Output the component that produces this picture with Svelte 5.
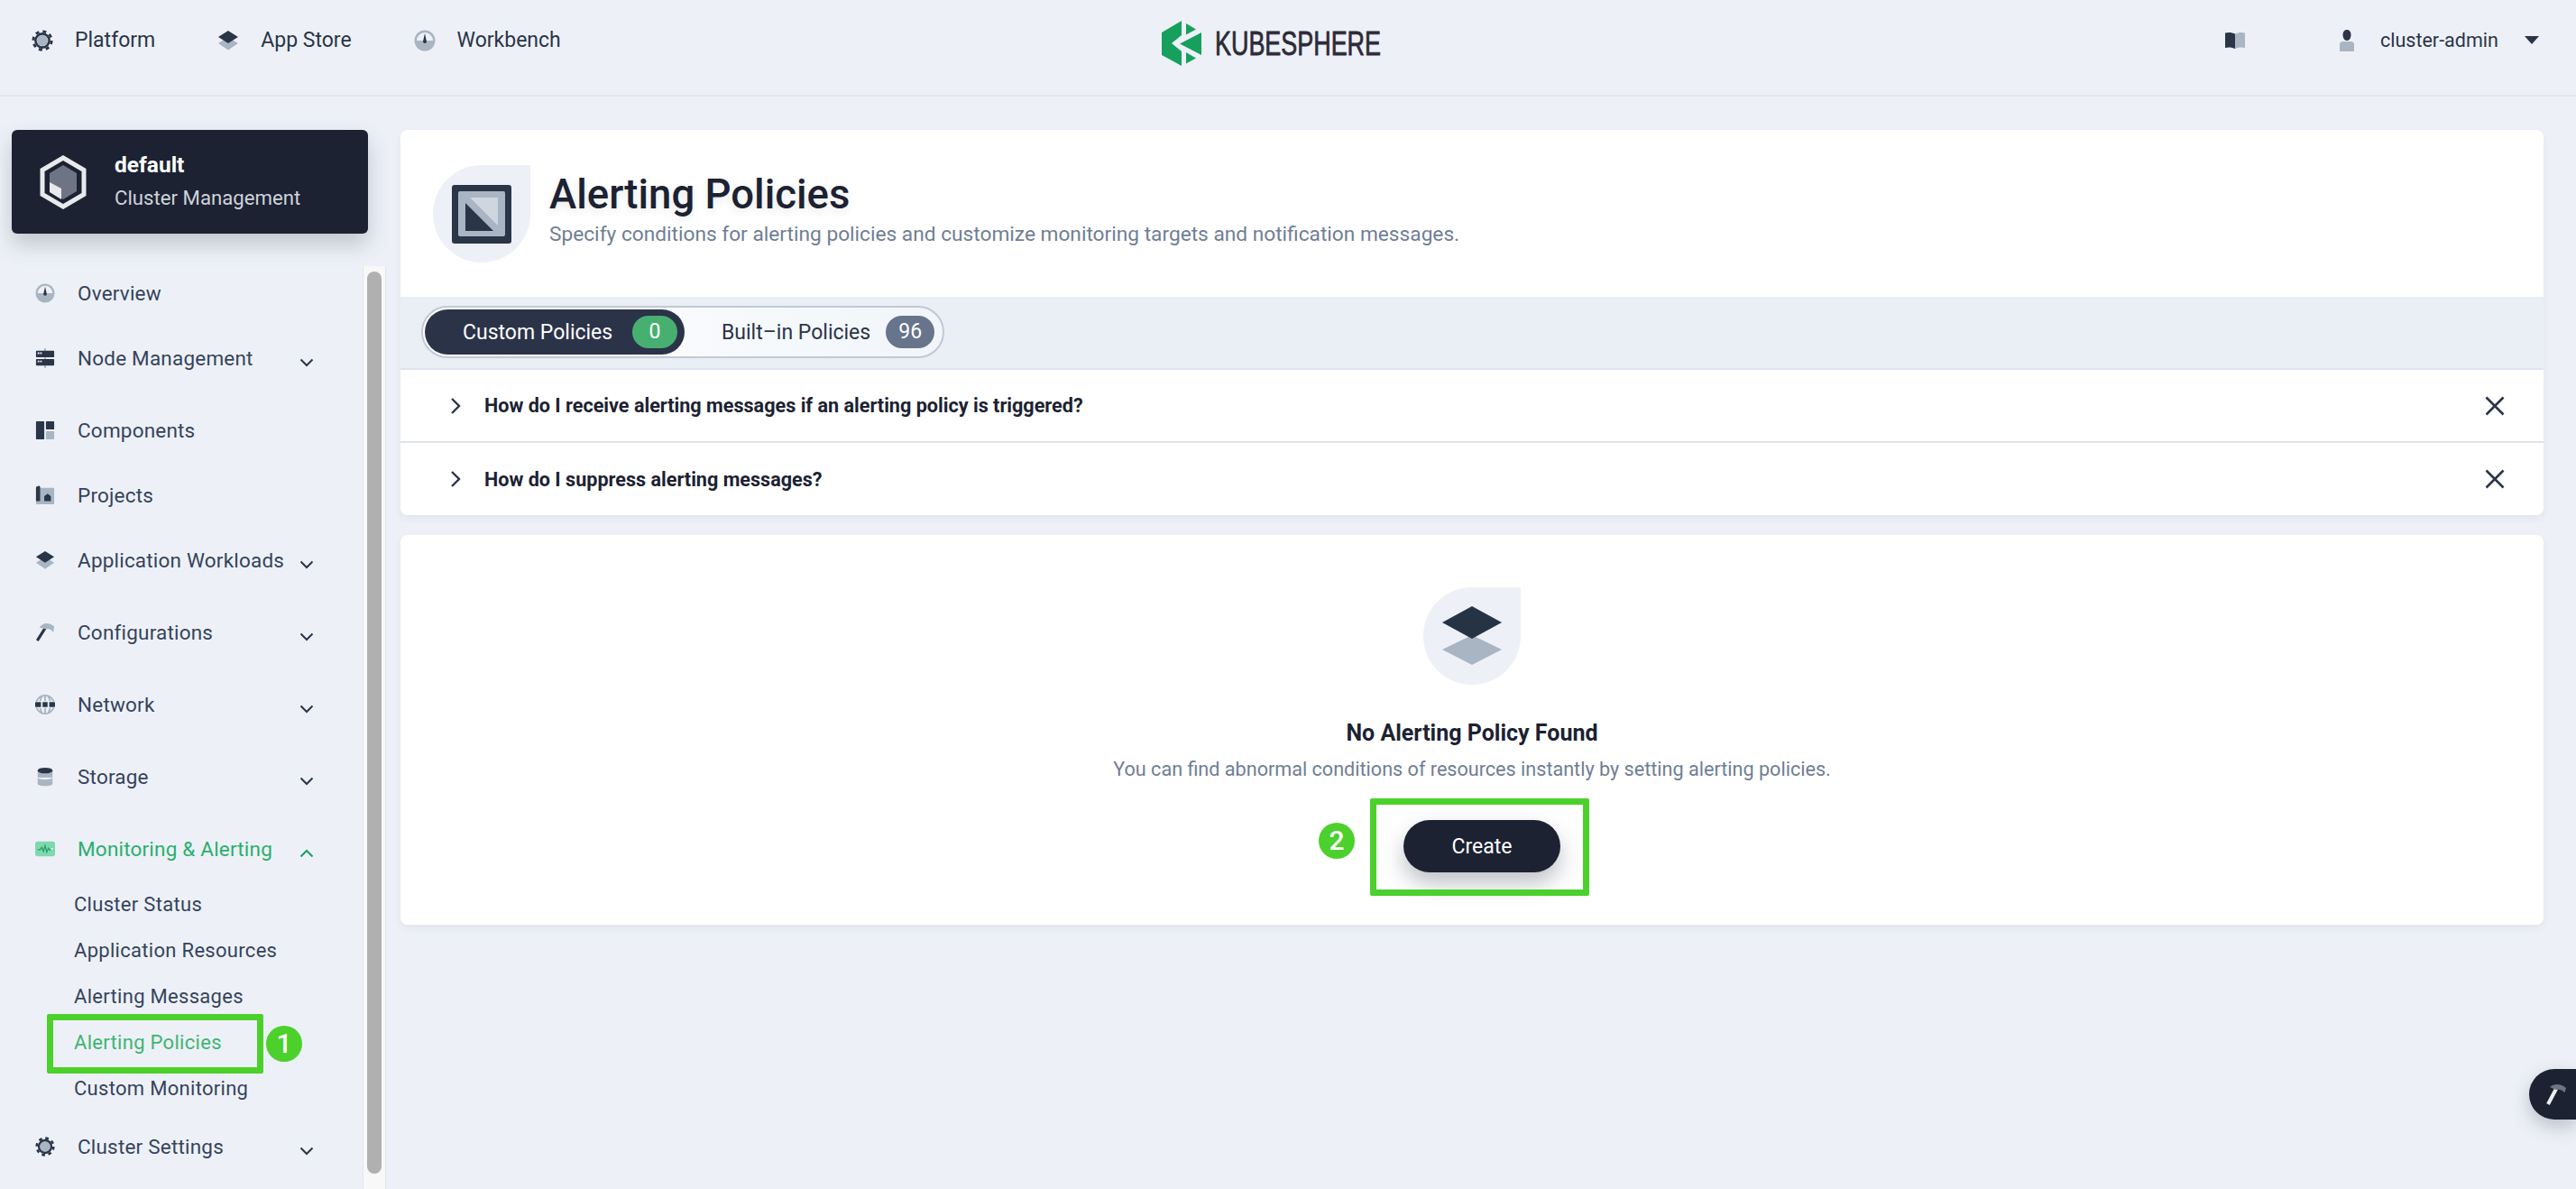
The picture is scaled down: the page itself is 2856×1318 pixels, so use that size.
<script>
	const menu = [
		{ icon: 'gauge', label: 'Overview' },
		{ icon: 'nodes', label: 'Node Management', more: true },
		{ icon: 'components', label: 'Components' },
		{ icon: 'projects', label: 'Projects' },
		{ icon: 'layers', label: 'Application Workloads', more: true },
		{ icon: 'hammer', label: 'Configurations', more: true },
		{ icon: 'network', label: 'Network', more: true },
		{ icon: 'storage', label: 'Storage', more: true },
		{
			icon: 'pulse',
			label: 'Monitoring & Alerting',
			open: true,
			children: ['Cluster Status', 'Application Resources', 'Alerting Messages', 'Alerting Policies', 'Custom Monitoring']
		},
		{ icon: 'gear', label: 'Cluster Settings', more: true }
	];
	const tips = [
		'How do I receive alerting messages if an alerting policy is triggered?',
		'How do I suppress alerting messages?'
	];
</script>

{#snippet icon(name)}
	<svg class="icon" viewBox="0 0 24 24" aria-hidden="true">
		{#if name === 'gear'}
			<circle cx="12" cy="12" r="6" fill="#a9b5c2" />
			<circle cx="12" cy="12" r="7.6" fill="none" stroke="#2a3548" stroke-width="2.6" />
			<circle cx="12" cy="12" r="10.2" fill="none" stroke="#2a3548" stroke-width="2.8" stroke-dasharray="4 4.01" />
		{:else if name === 'gauge'}
			<circle cx="12" cy="12" r="11.5" fill="#a9b5c2" />
			<path d="M3 12a9 9 0 0 1 18 0z" fill="#edf1f7" />
			<path d="M12 4l1.9 8.5a2 2 0 1 1-3.8 0z" fill="#2a3548" />
		{:else if name === 'layers'}
			<path d="M12 8l11 7-11 7.5L1 15z" fill="#a9b5c2" />
			<path d="M12 1l11 7-11 7L1 8z" fill="#2a3548" />
		{:else if name === 'nodes'}
			<rect x="11" y="0" width="2" height="24" fill="#a9b5c2" />
			<rect x="1" y="3" width="22" height="8" rx="1" fill="#2a3548" />
			<rect x="1" y="13" width="22" height="8" rx="1" fill="#2a3548" />
			<path d="M3 5h2v2H3zM6 5h2v2H6zM3 15h2v2H3zM6 15h2v2H6z" fill="#edf1f7" />
		{:else if name === 'components'}
			<rect x="1" y="1" width="10" height="22" rx="1" fill="#2a3548" />
			<rect x="13" y="1" width="10" height="10" rx="1" fill="#2a3548" />
			<rect x="13" y="13" width="10" height="10" rx="1" fill="#a9b5c2" />
		{:else if name === 'projects'}
			<rect x="1" y="3" width="22" height="20" rx="1" fill="#a9b5c2" />
			<path d="M3 1a2 2 0 0 1 3 1v17H1V3a2 2 0 0 1 2-2z" fill="#2a3548" />
			<path d="M11 13l4-3 4 3v6h-8z" fill="#2a3548" />
		{:else if name === 'hammer'}
			<path d="M2.500 22L12 7" stroke="#2a3548" stroke-width="3.4" fill="none" />
			<path d="M5 6c4-6 12-7 18-1l-1 7c-3-4-6-5-10-4z" fill="#a9b5c2" />
		{:else if name === 'network'}
			<circle cx="12" cy="12" r="11" fill="none" stroke="#a9b5c2" stroke-width="2" />
			<path d="M12 1v22M8 2c-3 6-3 14 0 20M16 2c3 6 3 14 0 20" fill="none" stroke="#a9b5c2" stroke-width="2" />
			<rect x="1" y="8" width="22" height="8" rx="3" fill="#edf1f7" />
			<path d="M2 9h5v6H2a3 3 0 0 1 0-6zM9 9h6v6H9zM17 9h5a3 3 0 0 1 0 6h-5z" fill="#2a3548" />
		{:else if name === 'storage'}
			<path d="M3 5h18v8H3z" fill="#a9b5c2" />
			<path d="M3 14c4 2 14 2 18 0v7c-2 3-16 3-18 0z" fill="#a9b5c2" />
			<ellipse cx="12" cy="4.500" rx="9" ry="3.500" fill="#2a3548" />
		{:else if name === 'pulse'}
			<rect x="0" y="3" width="24" height="18" rx="3" fill="#7fd8ae" />
			<path d="M3 13h3l2-3 2 5 2-7 2 8 2-5 1 2h2" fill="none" stroke="#1f9d62" stroke-width="1.3" />
			<circle cx="20.500" cy="12" r="1" fill="#fff" />
		{:else if name === 'book'}
			<path d="M1 3.500c4-1 8-.5 11 1V21c-3-1.500-7-2-11-1z" fill="#2a3548" />
			<path d="M23 3.500c-4-1-8-.5-11 1V21c3-1.500 7-2 11-1z" fill="#a9b5c2" />
		{:else if name === 'user'}
			<path d="M4 16c0-2 2-3 4-3h8c2 0 4 1 4 3v8H4z" fill="#a9b5c2" />
			<path d="M12 0c3 0 4.500 2.500 4.500 5.500S15 12 12 12s-4.500-3.500-4.500-6.500S9 0 12 0z" fill="#2a3548" />
		{/if}
	</svg>
{/snippet}

{#snippet chevron(up)}
	<svg class="chev" class:up viewBox="0 0 16 10" aria-hidden="true">
		<path d="M1.500 1.500L8 8l6.500-6.500" fill="none" stroke="currentColor" stroke-width="2" />
	</svg>
{/snippet}

<div class="app">
	<header class="topbar">
		<nav class="topnav">
			<a class="top-link" href="#platform">{@render icon('gear')}Platform</a>
			<a class="top-link" href="#store">{@render icon('layers')}App Store</a>
			<a class="top-link" href="#workbench">{@render icon('gauge')}Workbench</a>
		</nav>
		<div class="logo">
			<svg class="logo-mark" viewBox="0 0 44 50" aria-hidden="true">
				<path d="M22 0L0 13v25l22 12V34l-11-9 11-9z" fill="#17a05d" />
				<path d="M44 13L20 25.500 44 38z" fill="#17a05d" />
				<path d="M27 3l11 6.500-11 6zM27 35l11 6.500-11 6z" fill="#17a05d" />
			</svg>
			<svg class="logo-word" viewBox="0 0 184 30">
				<text x="0" y="28" textLength="184" lengthAdjust="spacingAndGlyphs">KUBESPHERE</text>
			</svg>
		</div>
		<div class="top-right">
			{@render icon('book')}
			<span class="user">{@render icon('user')}</span>
			<span class="user-name">cluster-admin</span>
			<span class="caret"></span>
		</div>
	</header>

	<div class="body">
		<aside class="sidebar">
			<div class="cluster">
				<svg class="cluster-icon" viewBox="0 0 54 60" aria-hidden="true">
					<path d="M27 3l23 13.500v27L27 57 4 43.500v-27z" fill="none" stroke="#e8e9ec" stroke-width="5" />
					<path d="M27 11l15 9v20l-15 9-15-9V20z" fill="#6d7584" />
					<path d="M12 30l13 7v12l-13-8z" fill="#e8e9ec" />
				</svg>
				<div class="cluster-text">
					<div class="cluster-name">default</div>
					<div class="cluster-sub">Cluster Management</div>
				</div>
			</div>

			<div class="nav-wrap">
				<ul class="menu">
					{#each menu as item}
						<li class="entry" class:group={item.more}>
							<div class="entry-row" class:active={item.open}>
								{@render icon(item.icon)}
								<span class="entry-label">{item.label}</span>
								{#if item.more}
									{@render chevron(false)}
								{:else if item.open}
									{@render chevron(true)}
								{/if}
							</div>
							{#if item.children}
								<ul class="submenu">
									{#each item.children as child}
										<li class="sub-item" class:current={child === 'Alerting Policies'}>
											{child}
											{#if child === 'Alerting Policies'}
												<span class="mark mark-menu"></span>
												<span class="step step-menu">1</span>
											{/if}
										</li>
									{/each}
								</ul>
							{/if}
						</li>
					{/each}
				</ul>
				<div class="scrollbar"><div class="thumb"></div></div>
			</div>
		</aside>

		<main class="content">
			<section class="card">
				<div class="page-head">
					<div class="drop">
						<svg class="policy-icon" viewBox="0 0 66 65" aria-hidden="true">
							<rect width="66" height="65" rx="3" fill="#2a3548" />
							<rect x="7" y="7" width="52" height="50" rx="2" fill="#a9b5c2" />
							<path d="M20 14h31v31z" fill="#cfd6df" />
							<path d="M15 20l31 31H15z" fill="#2a3548" />
						</svg>
					</div>
					<div class="head-text">
						<h1>Alerting Policies</h1>
						<p>Specify conditions for alerting policies and customize monitoring targets and notification messages.</p>
					</div>
				</div>
				<div class="tab-band">
					<div class="tabs">
						<div class="tab on">Custom Policies <span class="count green">0</span></div>
						<div class="tab">Built–in Policies <span class="count grey">96</span></div>
					</div>
				</div>
				{#each tips as tip}
					<div class="tip">
						<svg class="tip-arrow" viewBox="0 0 12 20" aria-hidden="true">
							<path d="M2 2l8 8-8 8" fill="none" stroke="#2a3548" stroke-width="2.400" />
						</svg>
						<span class="tip-text">{tip}</span>
						<svg class="tip-close" viewBox="0 0 22 22" aria-hidden="true">
							<path d="M1.500 1.500l19 19M20.500 1.500l-19 19" fill="none" stroke="#2a3548" stroke-width="2.600" />
						</svg>
					</div>
				{/each}
			</section>

			<section class="card empty">
				<div class="drop">
					<svg class="empty-icon" viewBox="0 0 66 66" aria-hidden="true">
						<path d="M33 32l33 16-33 17L0 48z" fill="#a9b5c2" />
						<path d="M33 0l33 18-33 18L0 18z" fill="#263345" />
					</svg>
				</div>
				<h2>No Alerting Policy Found</h2>
				<p>You can find abnormal conditions of resources instantly by setting alerting policies.</p>
				<div class="create-wrap">
					<button class="create">Create</button>
					<span class="mark mark-create"></span>
					<span class="step step-create">2</span>
				</div>
			</section>
		</main>
	</div>

	<div class="tool-btn">
		<svg viewBox="0 0 24 24" aria-hidden="true">
			<path d="M3 23L12 6" stroke="#eceef1" stroke-width="4" fill="none" />
			<path d="M5 4c5-4 12-4 18 1l-1.500 5c-3-3-6-4-10-3z" fill="#6d7584" />
		</svg>
	</div>
</div>

<style>
	:global(body) {
		margin: 0;
		background: #edf1f7;
	}

	.app {
		position: relative;
		height: 1318px;
		overflow: hidden;
		background: #edf1f7;
		font-family: Roboto, 'Liberation Sans', sans-serif;
		color: #36435c;
	}

	.icon {
		width: 24px;
		height: 24px;
		flex: none;
	}

	.topbar {
		display: grid;
		grid-template-columns: 1288px auto 1fr;
		align-items: center;
		height: 105px;
		border-bottom: 2px solid #e1e5ec;
	}

	.topnav {
		display: flex;
		padding-left: 35px;
		gap: 69px;
		padding-bottom: 16px;
	}

	.top-link {
		display: flex;
		align-items: center;
		gap: 24px;
		font-size: 23px;
		color: #2a3548;
		text-decoration: none;
	}

	.logo {
		display: flex;
		align-items: center;
		gap: 15px;
		padding-bottom: 10px;
	}

	.logo-mark {
		width: 44px;
		height: 50px;
	}

	.logo-word {
		width: 184px;
		height: 30px;
		overflow: visible;
	}

	.logo-word text {
		font-family: 'Liberation Sans', sans-serif;
		font-size: 36px;
		fill: #2f2a38;
		stroke: #2f2a38;
		stroke-width: 0.8px;
	}

	.top-right {
		display: flex;
		align-items: center;
		padding-left: 935px;
		padding-bottom: 16px;
		font-size: 21.500px;
		color: #2a3548;
	}

	.user {
		display: flex;
		margin-left: 100px;
		margin-right: 25px;
	}

	.user-name {
		margin-right: 29px;
	}

	.caret {
		border-left: 8px solid transparent;
		border-right: 8px solid transparent;
		border-top: 9px solid #2a3548;
	}

	.body {
		display: flex;
		padding-top: 37px;
	}

	.sidebar {
		width: 444px;
		flex: none;
	}

	.cluster {
		display: flex;
		align-items: center;
		gap: 30px;
		width: 395px;
		height: 115px;
		box-sizing: border-box;
		margin-left: 13px;
		padding-left: 30px;
		border-radius: 6px;
		background: #1c2232;
		color: #fff;
		box-shadow: 0 12px 24px rgba(36, 46, 66, 0.22);
	}

	.cluster-icon {
		width: 54px;
		height: 60px;
		flex: none;
	}

	.cluster-text {
		margin-top: -3px;
	}

	.cluster-name {
		font-size: 24.500px;
		font-weight: 700;
		line-height: 32px;
		margin-bottom: 5px;
	}

	.cluster-sub {
		font-size: 22.200px;
		line-height: 30px;
		color: #cfd3da;
	}

	.nav-wrap {
		display: flex;
		margin-top: 30px;
	}

	.menu,
	.submenu {
		list-style: none;
		margin: 0;
		padding: 0;
	}

	.menu {
		width: 402px;
		flex: none;
		padding-left: 39px;
		box-sizing: border-box;
	}

	.entry.group {
		margin-bottom: 8px;
	}

	.entry-row {
		display: flex;
		align-items: center;
		height: 72px;
		font-size: 22.500px;
		letter-spacing: 0.2px;
	}

	.entry-row .icon {
		width: 22px;
		height: 22px;
		margin-right: 25px;
	}

	.entry-label {
		flex: none;
		width: 246px;
		white-space: nowrap;
	}

	.entry-row.active {
		color: #2bae6c;
	}

	.chev {
		width: 16px;
		height: 10px;
		margin-top: 10px;
		color: #2a3548;
		flex: none;
	}

	.chev.up {
		transform: rotate(180deg);
		color: #1f9d62;
	}

	.submenu {
		margin-bottom: 3px;
	}

	.sub-item {
		position: relative;
		height: 51px;
		line-height: 51px;
		padding-left: 43px;
		font-size: 22px;
		letter-spacing: 0.3px;
	}

	.sub-item.current {
		color: #3fb572;
	}

	.mark {
		position: absolute;
		box-sizing: border-box;
		border: 7px solid #4cd02b;
		border-radius: 2px;
	}

	.step {
		position: absolute;
		width: 40px;
		height: 40px;
		border-radius: 50%;
		background: #4cd02b;
		color: #fff;
		font-size: 30px;
		font-weight: 500;
		line-height: 40px;
		text-align: center;
		letter-spacing: 0;
	}

	.mark-menu {
		left: 13px;
		top: -6px;
		width: 240px;
		height: 66px;
	}

	.step-menu {
		left: 256px;
		top: 7px;
	}

	.scrollbar {
		width: 26px;
		height: 1040px;
		margin-top: 6px;
		box-sizing: border-box;
		padding: 6px 4px 0;
		background: #f8f8f8;
		border-left: 1px solid #e4e6ea;
		border-right: 1px solid #e4e6ea;
	}

	.thumb {
		height: 1000px;
		border-radius: 8px;
		background: #b0b0b0;
	}

	.content {
		width: 2376px;
		flex: none;
	}

	.card {
		background: #fff;
		border-radius: 8px;
		overflow: hidden;
		box-shadow: 0 4px 8px rgba(36, 46, 66, 0.06);
	}

	.drop {
		display: flex;
		align-items: center;
		justify-content: center;
		width: 108px;
		height: 108px;
		flex: none;
		background: #edf1f7;
		border-radius: 50% 0 50% 50%;
	}

	.page-head {
		display: flex;
		gap: 21px;
		height: 185px;
		box-sizing: border-box;
		padding: 39px 36px;
	}

	.policy-icon {
		width: 66px;
		height: 65px;
	}

	h1 {
		margin: 5px 0 0;
		font-size: 45.500px;
		font-weight: 500;
		line-height: 56px;
		color: #1c2232;
		text-shadow: 0 4px 8px rgba(36, 46, 66, 0.1);
	}

	.head-text p {
		margin: 0;
		font-size: 22.700px;
		line-height: 32px;
		color: #707e94;
	}

	.tab-band {
		height: 81px;
		box-sizing: border-box;
		padding: 10px 0 0 23px;
		background: #eaeef5;
		border-bottom: 2px solid #dfe4eb;
	}

	.tabs {
		display: inline-flex;
		align-items: center;
		height: 58px;
		width: 580px;
		box-sizing: border-box;
		padding: 2px;
		border: 2px solid #c2c9d4;
		border-radius: 29px;
		background: linear-gradient(90deg, #fff, #f1f5fa);
	}

	.tab {
		display: flex;
		align-items: center;
		flex: none;
		height: 50px;
		padding: 0 8px 0 41px;
		border-radius: 25px;
		font-size: 23px;
		white-space: nowrap;
		color: #2a3548;
	}

	.tab.on {
		padding-left: 42px;
		background: #2b3349;
		color: #fff;
		width: 288px;
		box-sizing: border-box;
		justify-content: space-between;
	}

	.count {
		display: inline-block;
		height: 36px;
		line-height: 36px;
		border-radius: 18px;
		text-align: center;
		color: #fff;
	}

	.count.green {
		width: 50px;
		background: #47b071;
	}

	.count.grey {
		width: 54px;
		margin-left: 17px;
		background: #67748b;
	}

	.tip {
		display: flex;
		align-items: center;
		height: 79px;
		padding: 0 43px 0 55px;
		border-bottom: 2px solid #dfe4eb;
	}

	.tip:last-child {
		height: 80px;
		border-bottom: 0;
	}

	.tip-arrow {
		width: 12px;
		height: 20px;
		margin-right: 26px;
	}

	.tip-text {
		flex: 1;
		font-size: 21.600px;
		font-weight: 700;
		color: #1c2232;
	}

	.tip-close {
		width: 22px;
		height: 22px;
	}

	.empty {
		display: flex;
		flex-direction: column;
		align-items: center;
		margin-top: 22px;
		padding: 58px 0;
	}

	.empty-icon {
		width: 66px;
		height: 66px;
	}

	h2 {
		margin: 38px 0 8px;
		font-size: 25px;
		font-weight: 700;
		line-height: 32px;
		color: #1c2232;
	}

	.empty p {
		margin: 0 0 40px;
		font-size: 21.600px;
		line-height: 32px;
		color: #707e94;
	}

	.create-wrap {
		position: relative;
		margin-left: 22px;
	}

	.create {
		display: block;
		width: 174px;
		height: 58px;
		border: 0;
		border-radius: 29px;
		background: #1c2232;
		color: #fff;
		font-family: inherit;
		font-size: 23px;
		box-shadow: 0 12px 24px rgba(36, 46, 66, 0.3);
	}

	.mark-create {
		left: -37px;
		top: -24px;
		width: 243px;
		height: 108px;
	}

	.step-create {
		left: -94px;
		top: 3px;
	}

	.tool-btn {
		position: absolute;
		right: 0;
		top: 1185px;
		display: flex;
		align-items: center;
		width: 52px;
		height: 56px;
		padding-left: 18px;
		box-sizing: border-box;
		border-radius: 28px 0 0 28px;
		background: #1c2232;
		box-shadow: 0 8px 20px rgba(36, 46, 66, 0.25);
	}

	.tool-btn svg {
		width: 24px;
		height: 24px;
	}
</style>
